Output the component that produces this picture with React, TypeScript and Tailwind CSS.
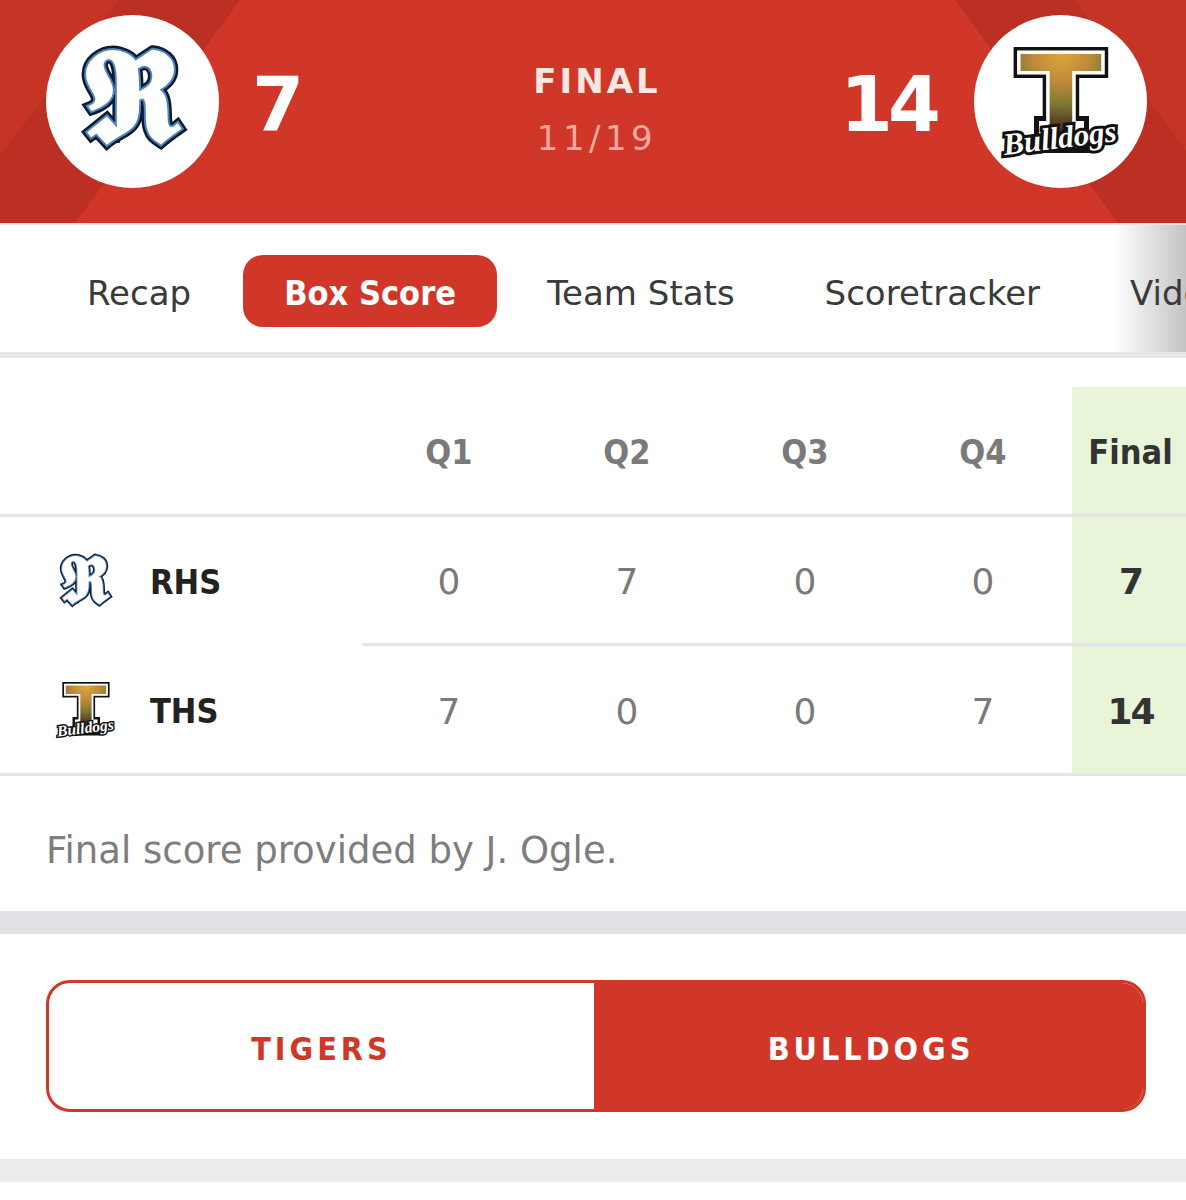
const sans = "font-['DejaVu_Sans',sans-serif]";
const cond = "font-['DejaVu_Sans_Condensed','DejaVu_Sans',sans-serif]";

function TigersLogo({ size }: { size: number }) {
  return (
    <svg width={size} height={size} viewBox="0 0 172 172" aria-hidden="true">
      <text x="84" y="125" textAnchor="middle" fontFamily="'DejaVu Serif', 'DejaVu Sans', 'Liberation Serif', serif" fontWeight="700" fontSize="130" fill="#fff" stroke="#0b1a30" strokeWidth="9" paintOrder="stroke">𝕽</text>
      <text x="84" y="125" textAnchor="middle" fontFamily="'DejaVu Serif', 'DejaVu Sans', 'Liberation Serif', serif" fontWeight="700" fontSize="130" fill="#fff" stroke="#4f83bd" strokeWidth="4" paintOrder="stroke">𝕽</text>
    </svg>
  );
}

function BulldogsLogo({ size }: { size: number }) {
  const id = `tfill${size}`;
  return (
    <svg width={size} height={size} viewBox="0 0 172 172" aria-hidden="true">
      <defs>
        <radialGradient id={id} gradientUnits="userSpaceOnUse" cx="86" cy="38" r="92">
          <stop offset="0" stopColor="#d9a93a" />
          <stop offset="0.3" stopColor="#c08a3a" />
          <stop offset="0.55" stopColor="#7c7a32" />
          <stop offset="0.8" stopColor="#4f2f24" />
          <stop offset="1" stopColor="#333" />
        </radialGradient>
      </defs>
      <rect x="59" y="100" width="55" height="37" fill="#111" />
      <text x="86" y="125" textAnchor="middle" fontFamily="'DejaVu Sans', sans-serif" fontWeight="700" fontSize="120" fill="#111" stroke="#111" strokeWidth="14">T</text>
      <rect x="64" y="105" width="45" height="27" fill="#fff" />
      <text x="86" y="125" textAnchor="middle" fontFamily="'DejaVu Sans', sans-serif" fontWeight="700" fontSize="120" fill="#fff" stroke="#fff" strokeWidth="7">T</text>
      <text x="86" y="125" textAnchor="middle" fontFamily="'DejaVu Sans', sans-serif" fontWeight="700" fontSize="120" fill={`url(#${id})`}>T</text>
      <text x="86" y="132" textAnchor="middle" fontFamily="'Liberation Serif', serif" fontStyle="italic" fontWeight="700" fontSize="31" fill="#fff" stroke="#111" strokeWidth="6" paintOrder="stroke" transform="rotate(-7 86 132)">Bulldogs</text>
    </svg>
  );
}

const rows = [
  { name: 'RHS', logo: <TigersLogo size={86} />, scores: ['0', '7', '0', '0'], total: '7', height: 'h-[129px]', nudge: 'pt-[4px]', nameNudge: 'pt-[2px]' },
  { name: 'THS', logo: <BulldogsLogo size={86} />, scores: ['7', '0', '0', '7'], total: '14', height: 'h-[127px]', nudge: 'pt-[5px]', nameNudge: 'pt-[4px]' },
];

export default function App() {
  return (
    <div className={`${sans} w-[1186px] h-[1200px] overflow-hidden bg-white`}>
      {/* score header */}
      <header className="relative h-[223px] bg-[#d13728] overflow-hidden">
        <svg className="absolute inset-0" width="1186" height="223" aria-hidden="true">
          <polygon points="118,0 240,0 75,223 0,223 0,155" fill="#bc3024" />
          <polygon points="0,0 118,0 0,155" fill="#c63426" />
          <polygon points="955,0 1075,0 1186,150 1186,223 1118,223" fill="#bc3024" />
          <polygon points="1075,0 1186,0 1186,150" fill="#c63426" />
        </svg>
        <div className="relative flex items-center h-full pl-[46px] pr-[39px] pb-[20px]">
          <div className="flex items-center justify-center w-[173px] h-[173px] rounded-full bg-white">
            <TigersLogo size={172} />
          </div>
          <div className="w-[118px] pt-[6px] text-center text-[75px] font-bold text-white leading-none">7</div>
          <div className="flex-1 text-center pl-[17px] pt-[16px]">
            <div className="text-[34px] font-bold tracking-[3px] text-[#fbe6e2] leading-[40px]">FINAL</div>
            <div className="mt-[17px] text-[34px] tracking-[4.5px] text-[#f0aaa0] leading-[40px]">11/19</div>
          </div>
          <div className="w-[134px] pt-[6px] text-left text-[76px] font-bold tracking-[-5px] text-white leading-none">14</div>
          <div className="flex items-center justify-center w-[173px] h-[173px] rounded-full bg-white">
            <BulldogsLogo size={172} />
          </div>
        </div>
      </header>

      {/* tabs */}
      <nav className="relative flex items-center h-[135px] pt-[4px] pl-[87px] border-t-[2px] border-[#e8e8e8] border-b-[6px] border-b-[#e6e6e6] text-[34px] text-[#3a3a3a] overflow-hidden whitespace-nowrap">
        <div className="absolute right-0 inset-y-0 w-[72px] bg-gradient-to-r from-transparent to-[#c4c4c4]" />
        <span className="shrink-0 pt-[6px]">Recap</span>
        <span className={`${cond} shrink-0 ml-[52px] w-[254px] h-[72px] pt-[6px] flex items-center justify-center rounded-[20px] bg-[#d13728] text-white font-bold`}>Box Score</span>
        <span className="relative shrink-0 ml-[50px] pt-[6px]">Team Stats</span>
        <span className="relative shrink-0 ml-[90px] pt-[6px]">Scoretracker</span>
        <span className="relative shrink-0 ml-[90px] pt-[6px]">Video</span>
      </nav>

      {/* box score */}
      <div className={`${cond} flex h-[156px] pt-[29px] text-[34px] font-bold text-[#7a7a7a] text-center`}>
        <div className="w-[360px]" />
        <div className="w-[178px] pt-[40px]">Q1</div>
        <div className="w-[178px] pt-[40px]">Q2</div>
        <div className="w-[178px] pt-[40px]">Q3</div>
        <div className="w-[178px] pt-[40px]">Q4</div>
        <div className="flex-1 pt-[40px] pl-[3px] bg-[#e8f5d9] text-[#333]">Final</div>
      </div>
      <div className="border-t-[3px] border-[#e6e6e8]">
        {rows.map((row, i) => (
          <div key={row.name} className={`flex ${row.height}`}>
            <div className={`${cond} flex items-center w-[362px] pl-[43px] text-[34px] font-bold text-[#222]`}>
              {row.logo}
              <span className={`ml-[21px] ${row.nameNudge}`}>{row.name}</span>
            </div>
            <div className={`flex flex-1 ${i === 0 ? 'border-b-[3px] border-[#e6e6e8]' : ''}`}>
              {row.scores.map((s, j) => (
                <div key={j} className={`flex items-center justify-center ${row.nudge} text-[36px] text-[#7a7a7a] ${j === 0 ? 'w-[176px] pr-[2px]' : 'w-[178px]'}`}>{s}</div>
              ))}
              <div className={`flex flex-1 items-center justify-center ${row.nudge} pl-[3px] bg-[#e8f5d9] text-[36px] font-bold tracking-[-2px] text-[#333]`}>{row.total}</div>
            </div>
          </div>
        ))}
      </div>
      <div className="border-t-[3px] border-[#e6e6e8] h-[138px] pl-[46px] pt-[53px] text-[37px] leading-[44px] text-[#7d7d7d]">
        Final score provided by J. Ogle.
      </div>
      <div className="h-[23px] bg-[#e1e1e6]" />

      {/* team toggle */}
      <div className="pl-[46px] pr-[40px] pt-[46px] pb-[47px]">
        <div className={`${cond} flex h-[132px] rounded-[24px] border-[3px] border-[#d13728] overflow-hidden text-[32px] font-bold tracking-[4px]`}>
          <div className="flex items-center justify-center w-[545px] pt-[5px] text-[#d13728]">TIGERS</div>
          <div className="flex flex-1 items-center justify-center pt-[5px] pl-[5px] bg-[#d13728] text-white">BULLDOGS</div>
        </div>
      </div>
      <div className="h-[23px] bg-[#ececec]" />
    </div>
  );
}
